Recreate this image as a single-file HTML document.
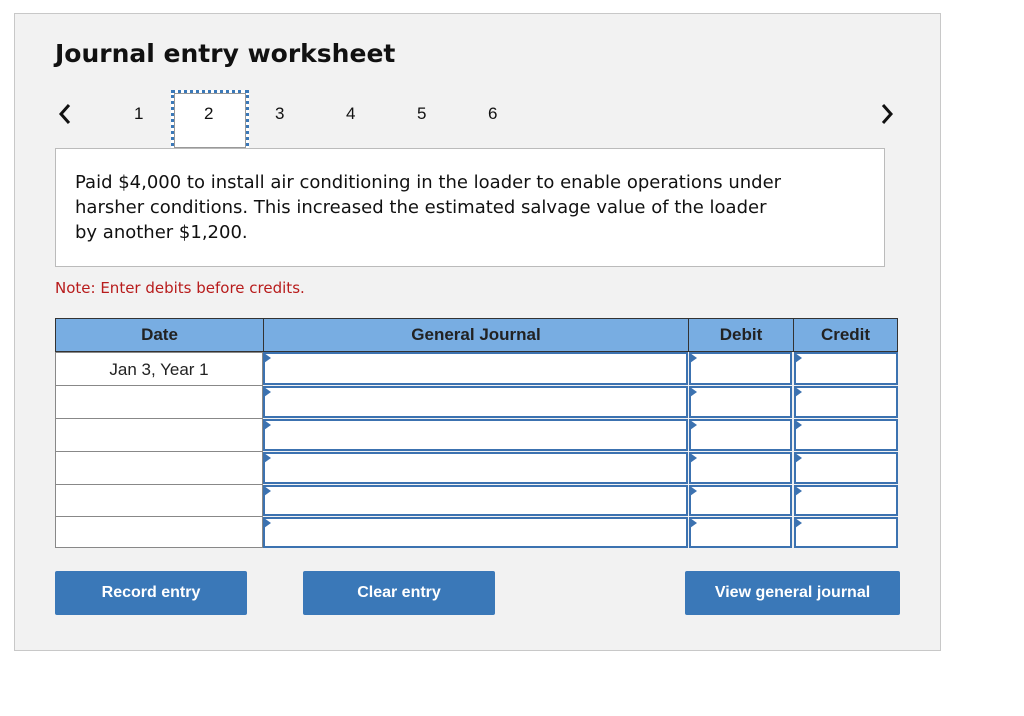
<html><head><style>
body{margin:0;background:#fff;font-family:"Liberation Sans",Arial,sans-serif;}
.panel{position:absolute;left:14px;top:13px;width:925px;height:636px;background:#f2f2f2;border:1px solid #c8c8c8;}
h1{position:absolute;left:55px;top:39px;margin:0;font-family:"DejaVu Sans",sans-serif;font-size:25px;font-weight:bold;color:#111;}
.n{position:absolute;top:104px;font-size:17px;color:#111;}
.tab{position:absolute;left:171px;top:90px;width:78px;height:61px;background:#fff;border:3px dotted #3a78b8;box-sizing:border-box;}
.tab div{position:absolute;left:0;top:0;right:0;bottom:0;border:1px solid #999;}
.box{position:absolute;left:55px;top:148px;width:830px;height:119px;background:#fff;border:1px solid #bbb;box-sizing:border-box;}
.box p{margin:0;position:absolute;left:19px;top:21px;font-family:"DejaVu Sans",sans-serif;font-size:18px;line-height:25px;color:#111;width:712px;}
.note{position:absolute;left:55px;top:279px;font-family:"DejaVu Sans",sans-serif;font-size:15px;color:#b81c1c;}
.hd{position:absolute;top:318px;height:34px;background:#78ade2;border:1px solid #333;box-sizing:border-box;font-weight:bold;font-size:17px;line-height:32px;text-align:center;color:#222;}
.dc{position:absolute;left:55px;width:208px;background:#fff;border:1px solid #888;box-sizing:border-box;text-align:center;font-size:17px;color:#222;}
.ic{position:absolute;background:#fff;border:2px solid #3c72b0;box-sizing:border-box;}
.ic:before{content:"";position:absolute;left:-1px;top:-1px;border-left:7px solid #3c72b0;border-top:5px solid transparent;border-bottom:5px solid transparent;}
.btn{position:absolute;top:571px;height:44px;background:#3a78b8;color:#fff;font-weight:bold;font-size:16px;line-height:44px;text-align:center;border-radius:2px;}
</style></head><body>
<div class="panel"></div>
<h1>Journal entry worksheet</h1>
<svg style="position:absolute;left:58px;top:103px" width="14" height="22"><path d="M11 2 L3 11 L11 20" stroke="#111" stroke-width="3" fill="none"/></svg>
<svg style="position:absolute;left:880px;top:103px" width="14" height="22"><path d="M3 2 L11 11 L3 20" stroke="#111" stroke-width="3" fill="none"/></svg>
<div class="tab"><div></div></div>
<div class="n" style="left:134px">1</div>
<div class="n" style="left:204px">2</div>
<div class="n" style="left:275px">3</div>
<div class="n" style="left:346px">4</div>
<div class="n" style="left:417px">5</div>
<div class="n" style="left:488px">6</div>
<div class="box"><p>Paid $4,000 to install air conditioning in the loader to enable operations under harsher conditions. This increased the estimated salvage value of the loader<br>by another $1,200.</p></div>
<div class="note">Note: Enter debits before credits.</div>
<div class="hd" style="left:55px;width:209px">Date</div>
<div class="hd" style="left:263px;width:426px">General Journal</div>
<div class="hd" style="left:688px;width:106px">Debit</div>
<div class="hd" style="left:793px;width:105px">Credit</div>
<div class="dc" style="top:352px;height:34px;line-height:34px">Jan 3, Year 1</div>
<div class="dc" style="top:385px;height:34px"></div>
<div class="dc" style="top:418px;height:34px"></div>
<div class="dc" style="top:451px;height:34px"></div>
<div class="dc" style="top:484px;height:33px"></div>
<div class="dc" style="top:516px;height:32px"></div>
<div class="ic" style="left:263px;top:352px;width:425px;height:33px"></div><div class="ic" style="left:689px;top:352px;width:103px;height:33px"></div><div class="ic" style="left:794px;top:352px;width:104px;height:33px"></div>
<div class="ic" style="left:263px;top:386px;width:425px;height:32px"></div><div class="ic" style="left:689px;top:386px;width:103px;height:32px"></div><div class="ic" style="left:794px;top:386px;width:104px;height:32px"></div>
<div class="ic" style="left:263px;top:419px;width:425px;height:32px"></div><div class="ic" style="left:689px;top:419px;width:103px;height:32px"></div><div class="ic" style="left:794px;top:419px;width:104px;height:32px"></div>
<div class="ic" style="left:263px;top:452px;width:425px;height:32px"></div><div class="ic" style="left:689px;top:452px;width:103px;height:32px"></div><div class="ic" style="left:794px;top:452px;width:104px;height:32px"></div>
<div class="ic" style="left:263px;top:485px;width:425px;height:31px"></div><div class="ic" style="left:689px;top:485px;width:103px;height:31px"></div><div class="ic" style="left:794px;top:485px;width:104px;height:31px"></div>
<div class="ic" style="left:263px;top:517px;width:425px;height:31px"></div><div class="ic" style="left:689px;top:517px;width:103px;height:31px"></div><div class="ic" style="left:794px;top:517px;width:104px;height:31px"></div>
<div class="btn" style="left:55px;width:192px">Record entry</div>
<div class="btn" style="left:303px;width:192px">Clear entry</div>
<div class="btn" style="left:685px;width:215px">View general journal</div>
</body></html>
